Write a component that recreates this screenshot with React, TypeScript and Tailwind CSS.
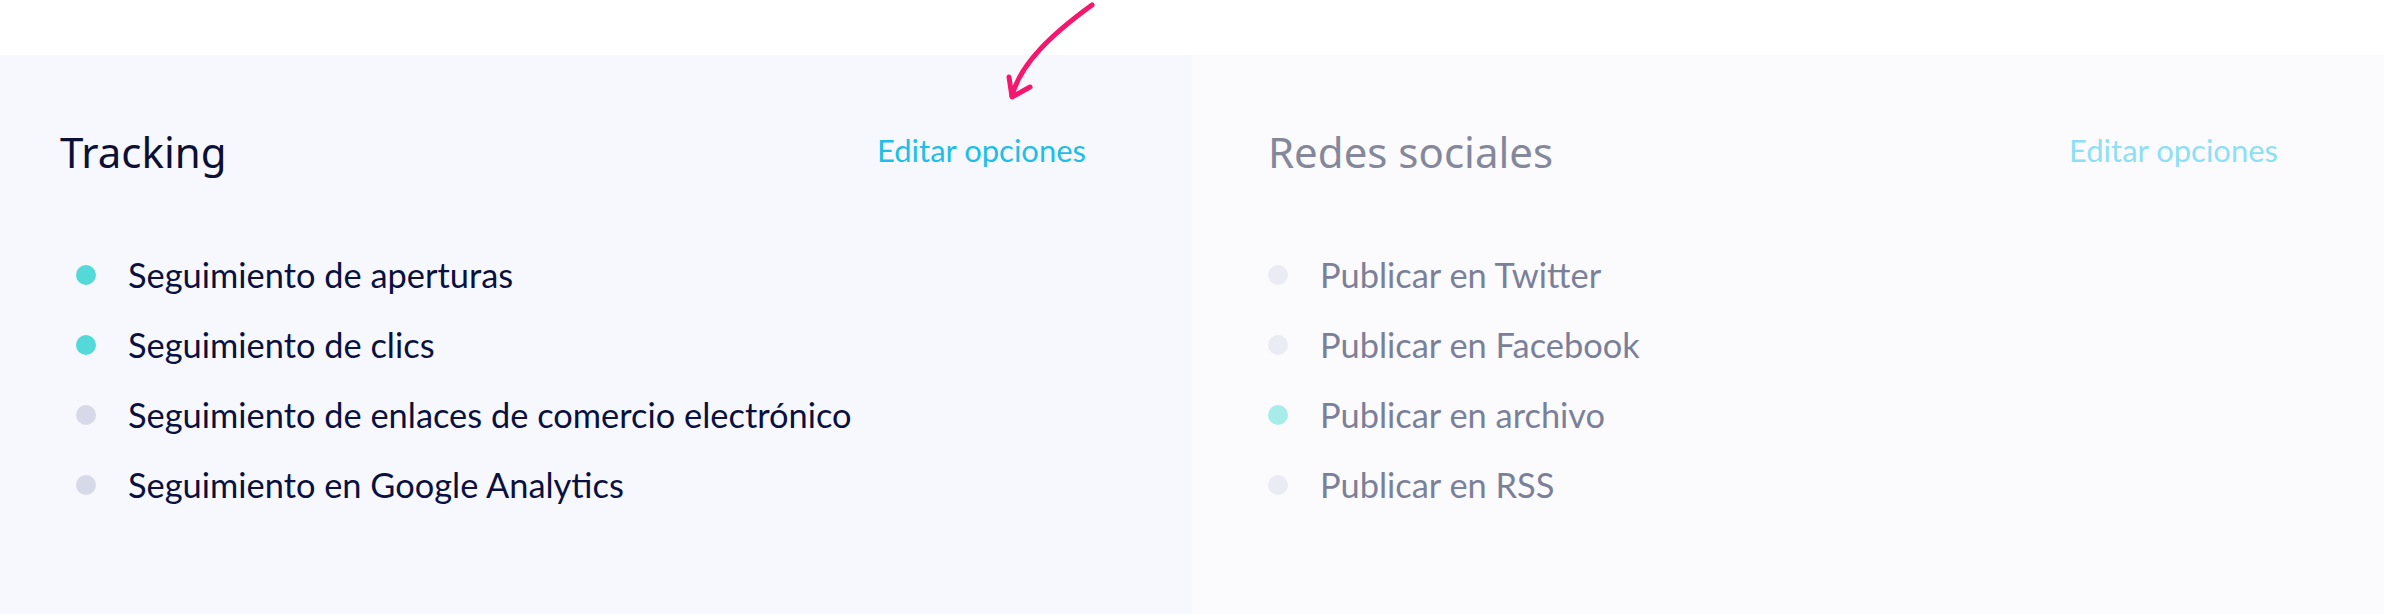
import React from 'react';

type Item = { label: string; on: boolean };

const tracking: Item[] = [
  { label: 'Seguimiento de aperturas', on: true },
  { label: 'Seguimiento de clics', on: true },
  { label: 'Seguimiento de enlaces de comercio electrónico', on: false },
  { label: 'Seguimiento en Google Analytics', on: false },
];

const social: Item[] = [
  { label: 'Publicar en Twitter', on: false },
  { label: 'Publicar en Facebook', on: false },
  { label: 'Publicar en archivo', on: true },
  { label: 'Publicar en RSS', on: false },
];

const Arrow = () => (
  <svg className="absolute left-0 top-0 pointer-events-none" width="1192" height="120" viewBox="0 0 1192 120" fill="none">
    <path d="M1092 5 C1052 34 1020 64 1012 96" stroke="#f5176d" strokeWidth="5" strokeLinecap="round" />
    <path d="M1009 77 L1012 97 L1030 87" stroke="#f5176d" strokeWidth="5" strokeLinecap="round" strokeLinejoin="round" />
  </svg>
);

export default function App() {
  return (
    <div className="relative w-[2384px] h-[614px] bg-white pt-[55px] overflow-hidden">
      <Arrow />
      <div className="grid grid-cols-2 h-[559px]">
        {/* Tracking */}
        <section className="bg-[#f7f8fd] pt-[73px]">
          <div className="flex items-start justify-between pl-[60px] pr-[106px]">
            <h2 className="font-['Noto_Sans',sans-serif] text-[42px] leading-[48px] text-[#0c1034]">Tracking</h2>
            <a className="mt-[6px] font-['Lato',sans-serif] text-[31px] leading-[32px] text-[#1ebee8] cursor-pointer">Editar opciones</a>
          </div>
          <ul className="mt-[64px] pl-[76px]">
            {tracking.map((it) => (
              <li key={it.label} className="h-[70px] flex items-center gap-8">
                <span className={`w-5 h-5 rounded-full shrink-0 ${it.on ? 'bg-[#52d9d8]' : 'bg-[#d6d9e7]'}`} />
                <span className="font-['Lato',sans-serif] text-[34.4px] leading-[44px] text-[#0a1140]">{it.label}</span>
              </li>
            ))}
          </ul>
        </section>

        {/* Redes sociales (desactivado) */}
        <section className="bg-[#fbfbfe] pt-[73px]">
          <div className="flex items-start justify-between pl-[76px] pr-[106px]">
            <h2 className="font-['Noto_Sans',sans-serif] text-[42px] leading-[48px] text-[#85889a]">Redes sociales</h2>
            <a className="mt-[6px] font-['Lato',sans-serif] text-[31px] leading-[32px] text-[#8edff4] cursor-pointer">Editar opciones</a>
          </div>
          <ul className="mt-[64px] pl-[76px]">
            {social.map((it) => (
              <li key={it.label} className="h-[70px] flex items-center gap-8">
                <span className={`w-5 h-5 rounded-full shrink-0 ${it.on ? 'bg-[#a8ecea]' : 'bg-[#ebecf3]'}`} />
                <span className="font-['Lato',sans-serif] text-[34.4px] leading-[44px] text-[#7b809a]">{it.label}</span>
              </li>
            ))}
          </ul>
        </section>
      </div>
    </div>
  );
}
